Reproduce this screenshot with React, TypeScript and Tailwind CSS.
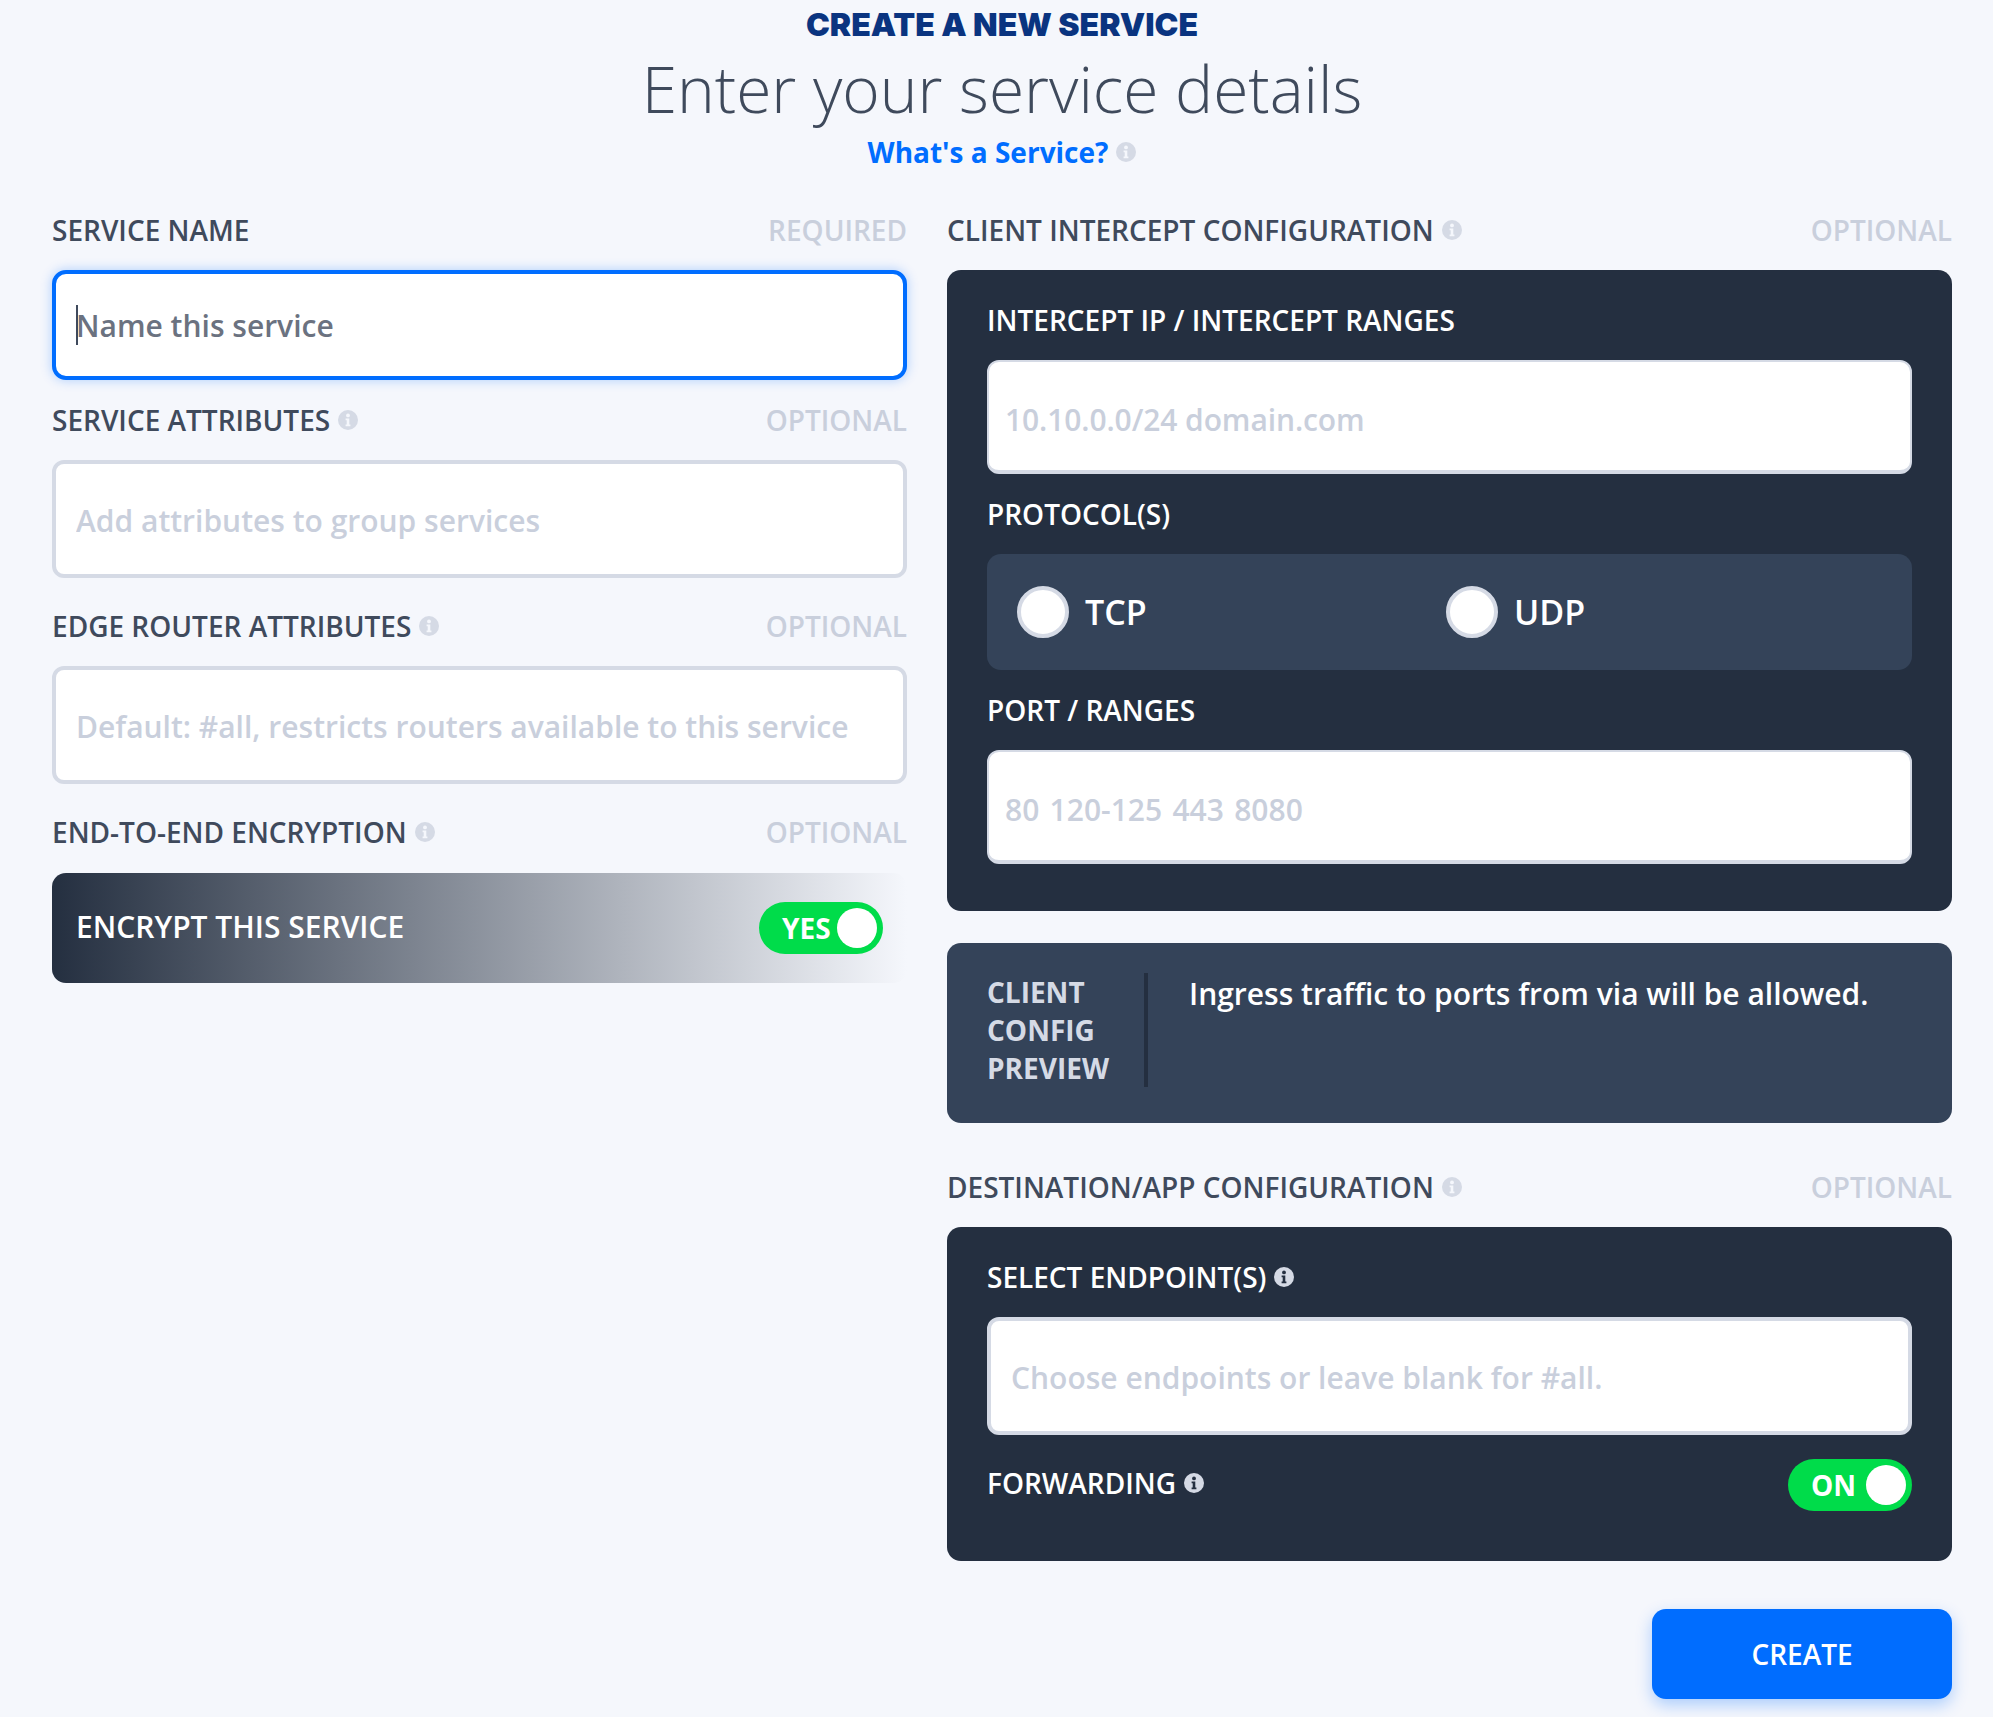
import React from "react";

function Info({ dark = false }: { dark?: boolean }) {
  return (
    <svg viewBox="0 0 20 20" className="ml-[8px] h-[20px] w-[20px] shrink-0" aria-hidden="true">
      <circle cx="10" cy="10" r="10" fill="#d5dae5" />
      <circle cx="10" cy="5.4" r="1.9" fill={dark ? "#242f40" : "#f5f7fc"} />
      <path d="M7.6 8.6h3.7v6h1.1v1.6H7.6v-1.6h1.1v-4.4H7.6z" fill={dark ? "#242f40" : "#f5f7fc"} />
    </svg>
  );
}

function Label({ text, tag, info }: { text: string; tag?: string; info?: boolean }) {
  return (
    <div className="flex h-[40px] items-center justify-between text-[28px] font-semibold">
      <div className="flex items-center text-[#3f4a5c]">
        <span>{text}</span>
        {info && <Info />}
      </div>
      {tag && <span className="text-[#c9cfdc]">{tag}</span>}
    </div>
  );
}

function PanelLabel({ text, info }: { text: string; info?: boolean }) {
  return (
    <div className="flex h-[40px] items-center text-[28px] font-semibold text-white">
      <span>{text}</span>
      {info && <Info dark />}
    </div>
  );
}

function BigInput({ placeholder, h }: { placeholder: string; h: string }) {
  return (
    <input
      readOnly
      placeholder={placeholder}
      className={`block w-full ${h} rounded-[12px] border-[4px] border-[#d5dae5] bg-white px-[20px] pt-[3px] text-[30px] font-semibold outline-none placeholder:text-[#c9cfdc]`}
    />
  );
}

function PanelInput({ placeholder, spaced }: { placeholder: string; spaced?: boolean }) {
  return (
    <input
      readOnly
      placeholder={placeholder}
      className={`block h-[114px] w-full rounded-[12px] border-[2px] border-b-[4px] border-[#d5dae5] bg-white px-[16px] pt-[6px] text-[30px] font-semibold outline-none placeholder:text-[#c9cfdc] ${spaced ? "[word-spacing:2.5px]" : "tracking-[-0.1px]"}`}
    />
  );
}

function Toggle({ text }: { text: string }) {
  return (
    <div className="flex h-[52px] w-[124px] items-center justify-between rounded-full bg-[#00dc4a] pl-[23px] pr-[6px] text-[28px] font-bold text-white">
      <span>{text}</span>
      <span className="h-[40px] w-[40px] rounded-full bg-white" />
    </div>
  );
}

function Radio({ text }: { text: string }) {
  return (
    <div className="flex items-center">
      <span className="h-[52px] w-[52px] rounded-full border-[4px] border-[#d5dae5] bg-white" />
      <span className="ml-[16px] text-[34px] font-semibold text-white">{text}</span>
    </div>
  );
}

export default function App() {
  return (
    <div className="h-[1717px] w-[1993px] overflow-hidden bg-[#f5f7fc] font-['Open_Sans',sans-serif]">
      <header className="flex flex-col items-center pl-[11px]">
        <div className="mt-[5px] h-[39px] font-['Inter',sans-serif] text-[32px] font-black leading-[40px] text-[#0a3480]">
          CREATE A NEW SERVICE
        </div>
        <div className="h-[88px] text-[64px] font-light leading-[90px] text-[#3f4a5c]">
          Enter your service details
        </div>
        <div className="flex h-[40px] items-center text-[28px] font-bold text-[#006dff]">
          <span>What's a Service?</span>
          <Info />
        </div>
      </header>
      <main className="mt-[38px] grid grid-cols-[855px_1005px] gap-x-[40px] pl-[52px]">
        <section>
          <Label text="SERVICE NAME" tag="REQUIRED" />
          <div className="relative mt-[20px]">
            <input
              readOnly
              placeholder="Name this service"
              className="block h-[110px] w-full rounded-[14px] border-[4px] border-[#006dff] bg-white px-[20px] pt-[1px] text-[30px] font-semibold shadow-[0_0_12px_rgba(0,109,255,0.3)] outline-none placeholder:text-[#6b7280]"
            />
            <span className="absolute left-[24px] top-[35px] h-[40px] w-[2px] bg-[#3f4a5c]" />
          </div>
          <div className="mt-[20px]">
            <Label text="SERVICE ATTRIBUTES" tag="OPTIONAL" info />
          </div>
          <div className="mt-[20px]">
            <BigInput placeholder="Add attributes to group services" h="h-[118px]" />
          </div>
          <div className="mt-[28px]">
            <Label text="EDGE ROUTER ATTRIBUTES" tag="OPTIONAL" info />
          </div>
          <div className="mt-[20px]">
            <BigInput placeholder="Default: #all, restricts routers available to this service" h="h-[118px]" />
          </div>
          <div className="mt-[28px]">
            <Label text="END-TO-END ENCRYPTION" tag="OPTIONAL" info />
          </div>
          <div className="mt-[21px] flex h-[110px] items-center justify-between rounded-[14px] bg-[linear-gradient(90deg,#242f40,#f5f7fc)] pl-[24px] pr-[24px]">
            <span className="-mt-[4px] text-[30px] font-semibold text-white">ENCRYPT THIS SERVICE</span>
            <Toggle text="YES" />
          </div>
        </section>
        <section>
          <Label text="CLIENT INTERCEPT CONFIGURATION" tag="OPTIONAL" info />
          <div className="mt-[20px] rounded-[14px] bg-[#242f40] px-[40px] pb-[47px] pt-[30px]">
            <PanelLabel text="INTERCEPT IP / INTERCEPT RANGES" />
            <div className="mt-[20px]">
              <PanelInput placeholder="10.10.0.0/24 domain.com" />
            </div>
            <div className="mt-[20px]">
              <PanelLabel text="PROTOCOL(S)" />
            </div>
            <div className="mt-[20px] grid h-[116px] grid-cols-[429px_1fr] items-center rounded-[14px] bg-[#344359] px-[30px]">
              <Radio text="TCP" />
              <Radio text="UDP" />
            </div>
            <div className="mt-[20px]">
              <PanelLabel text="PORT / RANGES" />
            </div>
            <div className="mt-[20px]">
              <PanelInput placeholder="80 120-125 443 8080" spaced />
            </div>
          </div>
          <div className="mt-[32px] flex h-[180px] rounded-[14px] bg-[#344359] pl-[40px] pt-[30px]">
            <div className="h-[114px] w-[161px] border-r-[4px] border-[#242f40] text-[28px] font-bold leading-[38px] text-[#d5dae5]">
              CLIENT
              <br />
              CONFIG
              <br />
              PREVIEW
            </div>
            <div className="ml-[41px] text-[30px] font-semibold leading-[42px] text-white">
              Ingress traffic to ports from via will be allowed.
            </div>
          </div>
          <div className="mt-[44px]">
            <Label text="DESTINATION/APP CONFIGURATION" tag="OPTIONAL" info />
          </div>
          <div className="mt-[20px] rounded-[14px] bg-[#242f40] px-[40px] pb-[50px] pt-[30px]">
            <PanelLabel text="SELECT ENDPOINT(S)" info />
            <div className="mt-[20px]">
              <BigInput placeholder="Choose endpoints or leave blank for #all." h="h-[118px]" />
            </div>
            <div className="mt-[24px] flex h-[52px] items-center justify-between">
              <div className="-mt-[4px]">
                <PanelLabel text="FORWARDING" info />
              </div>
              <Toggle text="ON" />
            </div>
          </div>
          <div className="mt-[48px] flex justify-end">
            <button className="h-[90px] w-[300px] rounded-[14px] bg-[#006dff] text-[28px] font-semibold text-white shadow-[0_6px_16px_rgba(0,109,255,0.3)]">
              CREATE
            </button>
          </div>
        </section>
      </main>
    </div>
  );
}
